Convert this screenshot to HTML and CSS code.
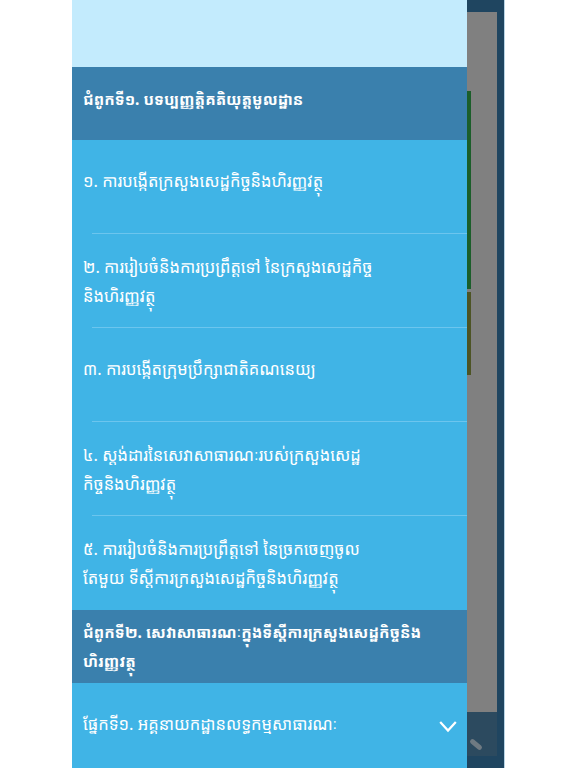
FILE: index.html
```html
<!DOCTYPE html>
<html lang="km">
<head>
<meta charset="utf-8">
<title>Menu</title>
<link rel="stylesheet" href="styles.css">
</head>
<body>
<div class="screen">
  <div class="gutter"></div>
  <nav class="panel">
    <div class="panel-top"></div>
    <div class="chapter one"><span>ជំពូកទី១. បទប្បញ្ញត្តិគតិយុត្តមូលដ្ឋាន</span></div>
    <div class="item single"><span>១. ការបង្កើតក្រសួងសេដ្ឋកិច្ចនិងហិរញ្ញវត្ថុ</span></div>
    <div class="item"><span>២. ការរៀបចំនិងការប្រព្រឹត្តទៅ នៃក្រសួងសេដ្ឋកិច្ច<br>និងហិរញ្ញវត្ថុ</span></div>
    <div class="item single"><span>៣. ការបង្កើតក្រុមប្រឹក្សាជាតិគណនេយ្យ</span></div>
    <div class="item"><span>៤. ស្តង់ដារនៃសេវាសាធារណៈរបស់ក្រសួងសេដ្ឋ<br>កិច្ចនិងហិរញ្ញវត្ថុ</span></div>
    <div class="item last"><span>៥. ការរៀបចំនិងការប្រព្រឹត្តទៅ នៃច្រកចេញចូល<br>តែមួយ ទីស្តីការក្រសួងសេដ្ឋកិច្ចនិងហិរញ្ញវត្ថុ</span></div>
    <div class="chapter"><span>ជំពូកទី២. សេវាសាធារណៈក្នុងទីស្តីការក្រសួងសេដ្ឋកិច្ចនិង<br>ហិរញ្ញវត្ថុ</span></div>
    <div class="item section"><span>ផ្នែកទី១. អគ្គនាយកដ្ឋានលទ្ធកម្មសាធារណៈ</span>
      <svg class="chev" width="18" height="13" viewBox="0 0 18 13"><path d="M1.2 2 L9 10.5 L16.8 2" fill="none" stroke="#fff" stroke-width="2.2"/></svg>
    </div>
  </nav>
  <div class="rail">
    <div class="rail-top"></div>
    <div class="rail-gray">
      <div class="bar green"></div>
      <div class="bar olive"></div>
    </div>
    <div class="rail-foot"><div class="handle"></div></div>
    <div class="rail-bottom"></div>
  </div>
  <div class="rest"></div>
</div>
</body>
</html>
```
FILE: styles.css
```css
html, body {
  margin: 0;
  padding: 0;
  background: #ffffff;
}
.screen {
  display: flex;
  width: 576px;
  height: 768px;
  overflow: hidden;
  font-family: "Noto Sans", "Noto Sans Khmer", "Khmer OS", sans-serif;
  color: #ffffff;
}
.gutter {
  width: 72px;
  flex: none;
  background: #ffffff;
}
.panel {
  width: 395px;
  flex: none;
  display: flex;
  flex-direction: column;
  background: #40b4e6;
}
.panel-top {
  height: 67px;
  flex: none;
  background: #c3ebfd;
}
.chapter {
  height: 73px;
  flex: none;
  box-sizing: border-box;
  background: #3a80ad;
  display: flex;
  align-items: center;
  padding: 0 11px;
  font-size: 15.5px;
  font-weight: bold;
  line-height: 29px;
}
.chapter.one {
  padding-bottom: 8px;
}
.item {
  height: 94px;
  flex: none;
  box-sizing: border-box;
  display: flex;
  align-items: center;
  padding: 0 11px;
  font-size: 16.5px;
  line-height: 29px;
  position: relative;
}
.item.single {
  padding-bottom: 14px;
}
.item::after {
  content: "";
  position: absolute;
  left: 20px;
  right: 0;
  bottom: 0;
  height: 1px;
  background: #6cc5ee;
}
.item.last::after,
.item.section::after {
  display: none;
}
.item.section {
  height: 85px;
  align-items: flex-start;
  padding: 26px 10px 0 11px;
  justify-content: space-between;
}
.chev {
  margin-top: 11px;
}
.rail {
  width: 37px;
  flex: none;
  display: flex;
  flex-direction: column;
  background: #1f4560;
  border-right: 1px solid #b9d5e6;
}
.rail-top {
  height: 12px;
  flex: none;
}
.rail-gray {
  flex: 1;
  margin-right: 7px;
  background: #808080;
  display: flex;
  flex-direction: column;
  padding-top: 79px;
  gap: 3px;
}
.bar {
  width: 4px;
}
.bar.green {
  height: 198px;
  background: #1b5e2a;
}
.bar.olive {
  height: 83px;
  background: #4d5424;
}
.rail-foot {
  height: 44px;
  flex: none;
  margin-right: 7px;
  background: #2c4a5f;
  position: relative;
  overflow: hidden;
}
.handle {
  position: absolute;
  left: 2px;
  top: 30px;
  width: 14px;
  height: 5px;
  border-radius: 3px;
  background: #6f7a82;
  transform: rotate(40deg);
}
.rail-bottom {
  height: 12px;
  flex: none;
}
.rest {
  flex: 1;
  background: #ffffff;
}
```
